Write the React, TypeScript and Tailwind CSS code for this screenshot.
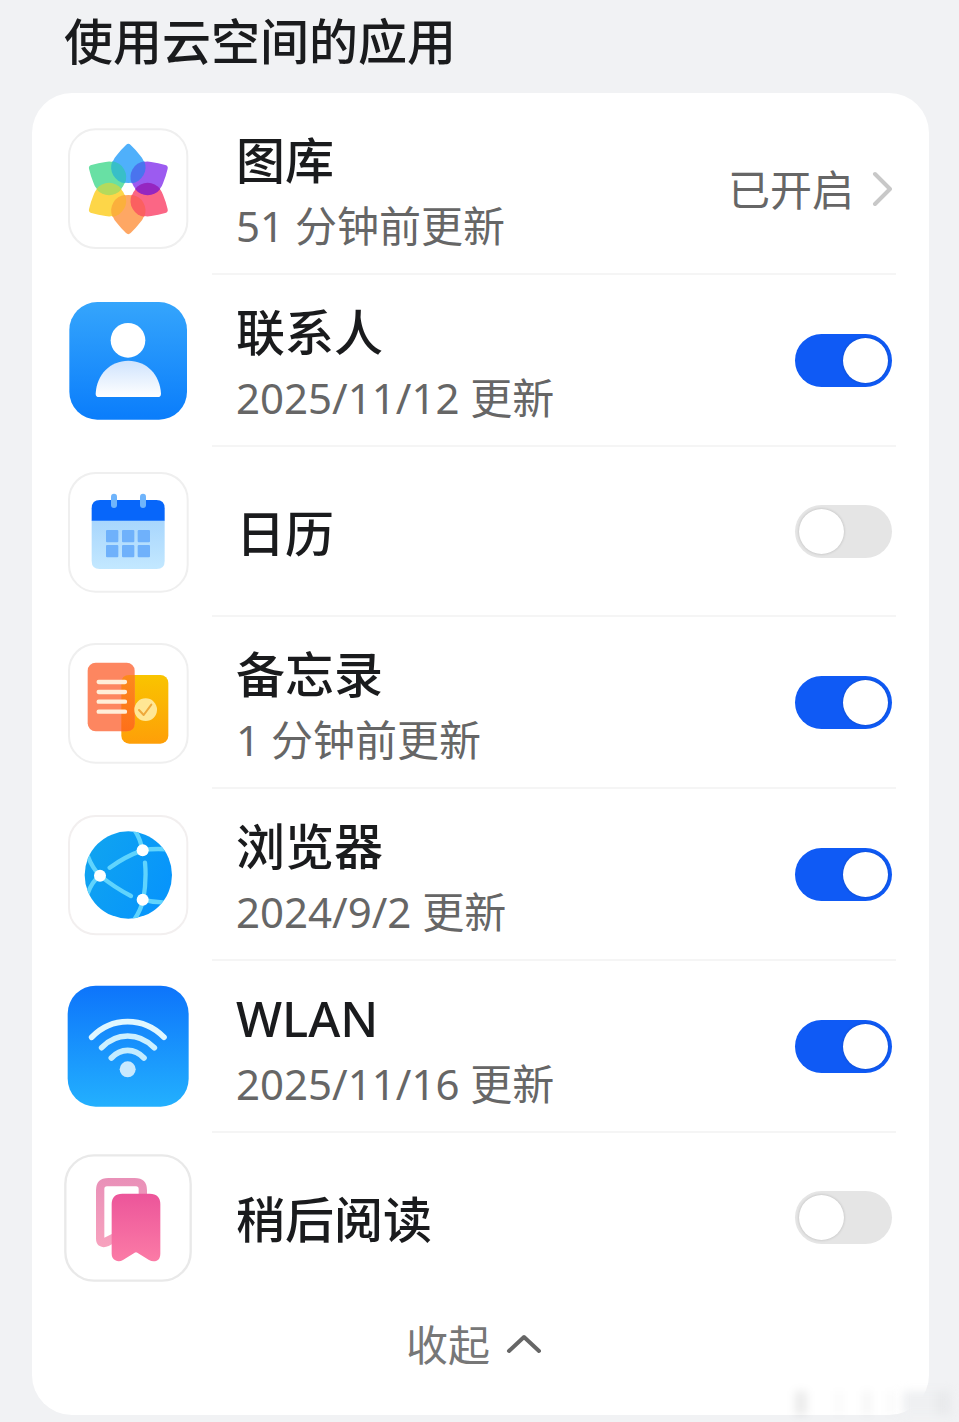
import { useState } from "react";
import type { ReactNode } from "react";

function GalleryIcon() {
  const petals = [
    { angle: 0, color: "#4fb0fb" },
    { angle: 60, color: "#9c5bf0" },
    { angle: 120, color: "#fb6685" },
    { angle: 180, color: "#fea764" },
    { angle: 240, color: "#fdd648" },
    { angle: 300, color: "#68e0a4" },
  ];
  const overlaps = [
    { angle: 30, color: "#4a74ee" },
    { angle: 90, color: "#9526c0" },
    { angle: 150, color: "#fb6060" },
    { angle: 210, color: "#fbb03c" },
    { angle: 270, color: "#b4da5c" },
    { angle: 330, color: "#38bfc8" },
  ];
  return (
    <svg viewBox="42 45 384 384" className="size-32" aria-hidden="true">
      <rect x="57" y="58" width="355" height="356" rx="80" fill="#fff" stroke="#efefef" strokeWidth="6" />
      {petals.map((p) => (
        <path
          key={p.angle}
          d="M228 105Q235 98 242 105Q258 120 271 137A49 49 0 1 1 199 137Q212 120 228 105Z"
          fill={p.color}
          transform={`rotate(${p.angle} 235 237)`}
        />
      ))}
      {overlaps.map((o) => (
        <path
          key={o.angle}
          d="M235 141A48 48 0 0 1 235 217A48 48 0 0 1 235 141Z"
          fill={o.color}
          transform={`rotate(${o.angle} 235 237)`}
        />
      ))}
    </svg>
  );
}

function ContactsIcon() {
  return (
    <svg viewBox="42 36 384 384" className="size-32" aria-hidden="true">
      <defs>
        <linearGradient id="contacts-bg" x1="0" y1="0" x2="0" y2="1">
          <stop offset="0" stopColor="#35a5fc" />
          <stop offset="1" stopColor="#0a7dfb" />
        </linearGradient>
        <linearGradient id="contacts-body" x1="0" y1="0" x2="0" y2="1">
          <stop offset="0" stopColor="#cfe3fd" />
          <stop offset="1" stopColor="#fff" />
        </linearGradient>
      </defs>
      <rect x="58" y="51" width="353" height="353" rx="84" fill="url(#contacts-bg)" />
      <circle cx="234" cy="166" r="52" fill="#fff" />
      <path d="M137 326C140 268 181 227 235 227S330 268 333 326Q333 336 323 336H147Q137 336 137 326Z" fill="url(#contacts-body)" />
    </svg>
  );
}

function CalendarIcon() {
  return (
    <svg viewBox="42 39 384 384" className="size-32" aria-hidden="true">
      <defs>
        <linearGradient id="calendar-body" x1="0" y1="0" x2="0" y2="1">
          <stop offset="0" stopColor="#a8d6fd" />
          <stop offset="1" stopColor="#c3e8ff" />
        </linearGradient>
      </defs>
      <rect x="57" y="54" width="356" height="356" rx="80" fill="#fff" stroke="#efefef" strokeWidth="6" />
      <path d="M125 196H344V318Q344 342 320 342H149Q125 342 125 318Z" fill="url(#calendar-body)" />
      <path d="M125 197V160Q125 135 150 135H319Q344 135 344 160V197Z" fill="#0766fa" />
      <rect x="183" y="116" width="18" height="43" rx="9" fill="#6fb4fb" />
      <rect x="270" y="116" width="18" height="43" rx="9" fill="#6fb4fb" />
      {[168, 216, 263].map((x) => (
        <g key={x} fill="#6fb1fb">
          <rect x={x} y="225" width="37" height="37" rx="3" />
          <rect x={x} y="270" width="37" height="37" rx="3" />
        </g>
      ))}
    </svg>
  );
}

function NotesIcon() {
  return (
    <svg viewBox="42 42 384 384" className="size-32" aria-hidden="true">
      <defs>
        <linearGradient id="notes-back" x1="0" y1="0" x2="0" y2="1">
          <stop offset="0" stopColor="#f9c400" />
          <stop offset="1" stopColor="#fe9f08" />
        </linearGradient>
        <linearGradient id="notes-overlap" x1="0" y1="0" x2="0" y2="1">
          <stop offset="0" stopColor="#fc8a1c" />
          <stop offset="1" stopColor="#fe6f1a" />
        </linearGradient>
      </defs>
      <rect x="57" y="57" width="356" height="356" rx="80" fill="#fff" stroke="#efefef" strokeWidth="6" />
      <rect x="214" y="150" width="141" height="206" rx="24" fill="url(#notes-back)" />
      <rect x="113" y="113" width="141" height="206" rx="24" fill="#fd8660" />
      <path d="M254 150H238Q214 150 214 174V319H230Q254 319 254 295Z" fill="url(#notes-overlap)" />
      <path d="M146 171H225M146 201H225M146 230H225M146 260H225" stroke="#ffeed8" strokeWidth="13" strokeLinecap="round" />
      <circle cx="287" cy="254" r="34" fill="#ffe795" />
      <path d="M267 255L281 270L304 239" fill="none" stroke="#eea93b" strokeWidth="6" strokeLinecap="round" strokeLinejoin="round" />
    </svg>
  );
}

function BrowserIcon() {
  return (
    <svg viewBox="42 42 384 384" className="size-32" aria-hidden="true">
      <defs>
        <linearGradient id="browser-globe" x1="0" y1="0" x2="1" y2="0.5">
          <stop offset="0" stopColor="#11a5ef" />
          <stop offset="1" stopColor="#0795fb" />
        </linearGradient>
        <clipPath id="browser-clip">
          <circle cx="235" cy="234" r="131" />
        </clipPath>
      </defs>
      <rect x="57" y="57" width="355" height="355" rx="80" fill="#fff" stroke="#f2efef" strokeWidth="6" />
      <circle cx="235" cy="234" r="131" fill="url(#browser-globe)" />
      <g clipPath="url(#browser-clip)">
        <g fill="none" stroke="#60d4fd" strokeWidth="13" strokeLinecap="round">
          <path d="M251 96Q271 122 277 160Q226 178 179 212" />
          <path d="M277 160Q312 154 350 157" />
          <path d="M150 236Q127 213 113 176" />
          <path d="M150 236Q125 254 113 290" />
          <path d="M150 236Q194 272 243 297" />
          <path d="M285 197Q290 250 280 307Q272 342 250 372" />
          <path d="M278 307Q312 318 350 316" />
        </g>
        <g fill="#fff">
          <circle cx="278" cy="160" r="18" />
          <circle cx="150" cy="236" r="18" />
          <circle cx="278" cy="308" r="18" />
        </g>
      </g>
    </svg>
  );
}

function WlanIcon() {
  return (
    <svg viewBox="42 45 384 384" className="size-32" aria-hidden="true">
      <defs>
        <linearGradient id="wlan-bg" x1="0" y1="0" x2="0" y2="1">
          <stop offset="0" stopColor="#0d74fb" />
          <stop offset="1" stopColor="#23b0fe" />
        </linearGradient>
      </defs>
      <rect x="53" y="53" width="363" height="363" rx="84" fill="url(#wlan-bg)" />
      <g fill="none" strokeWidth="17" strokeLinecap="round">
        <path d="M125 208Q170 161 233 161T342 208" stroke="#e0f7ff" />
        <path d="M155 239Q188 204 233 204T313 239" stroke="#ccf0ff" />
        <path d="M184 270Q205 247 233 247T282 270" stroke="#c4ecff" />
      </g>
      <circle cx="233" cy="304" r="24" fill="#c8e9fe" />
    </svg>
  );
}

function ReadLaterIcon() {
  return (
    <svg viewBox="42 42 384 384" className="size-32" aria-hidden="true">
      <defs>
        <linearGradient id="bookmark-back" x1="0" y1="0" x2="0" y2="1">
          <stop offset="0" stopColor="#e990b8" />
          <stop offset="1" stopColor="#f7a2be" />
        </linearGradient>
        <linearGradient id="bookmark-front" x1="0" y1="0" x2="0" y2="1">
          <stop offset="0" stopColor="#ec559a" />
          <stop offset="1" stopColor="#fb7ba6" />
        </linearGradient>
      </defs>
      <rect x="46" y="46" width="376" height="376" rx="86" fill="#fff" stroke="#e9e9e9" strokeWidth="7" />
      <path
        d="M175 114H254Q291 114 291 151V190H266V147Q266 139 258 139H171Q163 139 163 147V293L187 281V312L176 318Q160 325 149 318Q138 312 138 296V151Q138 114 175 114Z"
        fill="url(#bookmark-back)"
      />
      <path
        d="M217 161H299Q331 161 331 193V341Q331 357 320 362Q309 367 297 360L262 338Q258 336 254 338L219 360Q207 367 196 361Q185 355 185 341V193Q185 161 217 161Z"
        fill="url(#bookmark-front)"
      />
    </svg>
  );
}

interface AppItem {
  id: string;
  name: string;
  detail?: string;
  icon: ReactNode;
  enabled?: boolean;
  status?: string;
}

const apps: AppItem[] = [
  { id: "gallery", name: "图库", detail: "51 分钟前更新", icon: <GalleryIcon />, status: "已开启" },
  { id: "contacts", name: "联系人", detail: "2025/11/12 更新", icon: <ContactsIcon />, enabled: true },
  { id: "calendar", name: "日历", icon: <CalendarIcon />, enabled: false },
  { id: "notes", name: "备忘录", detail: "1 分钟前更新", icon: <NotesIcon />, enabled: true },
  { id: "browser", name: "浏览器", detail: "2024/9/2 更新", icon: <BrowserIcon />, enabled: true },
  { id: "wlan", name: "WLAN", detail: "2025/11/16 更新", icon: <WlanIcon />, enabled: true },
  { id: "read-later", name: "稍后阅读", icon: <ReadLaterIcon />, enabled: false },
];

function Switch({ id, initial }: { id: string; initial: boolean }) {
  const [on, setOn] = useState(initial);
  return (
    <input
      id={id}
      type="checkbox"
      role="switch"
      checked={on}
      onChange={(e) => setOn(e.target.checked)}
      className="h-[53px] w-[97px] shrink-0 cursor-pointer appearance-none rounded-full bg-[#e5e5e5] before:m-1 before:block before:size-[45px] before:rounded-full before:bg-white before:shadow-[0_0_3px_rgba(0,0,0,0.2)] checked:bg-[#0f5af5] checked:before:ml-12"
    />
  );
}

function Row({ app }: { app: AppItem }) {
  const text = (
    <>
      <span className="block text-[49px] leading-[72px] font-medium text-[#1a1b1d]">{app.name}</span>
      {app.detail && <span className="block text-[42px] leading-[60px] text-[#666]">{app.detail}</span>}
    </>
  );
  return (
    <li className="group flex items-stretch">
      <div className="flex w-32 shrink-0 items-center">{app.icon}</div>
      <div
        className={`ml-5 flex min-w-0 flex-1 items-center justify-between border-b-2 border-[#f5f5f5] pr-1 pl-6 group-last:border-transparent ${
          app.detail ? "py-[17px]" : "py-[46px]"
        }`}
      >
        {app.status ? (
          <a href="#gallery" className="flex flex-1 items-center justify-between">
            <span className="pt-1">{text}</span>
            <span className="flex items-center gap-[18px] pt-1 text-[42px] leading-[60px] text-[#666]">
              {app.status}
              <svg viewBox="0 0 20 38" className="h-[38px] w-5" fill="none" aria-hidden="true">
                <path d="M3 3L18 18L3 33" stroke="#c8c8c8" strokeWidth="4" strokeLinecap="round" strokeLinejoin="round" />
              </svg>
            </span>
          </a>
        ) : (
          <>
            <label htmlFor={app.id} className="pt-1">
              {text}
            </label>
            <Switch id={app.id} initial={app.enabled ?? false} />
          </>
        )}
      </div>
    </li>
  );
}

export default function App() {
  return (
    <main className="relative min-h-screen bg-[#f1f2f4] pr-[30px] pb-2 pl-8 font-['Noto_Sans','Noto_Sans_CJK_SC',sans-serif]">
      <h1 className="px-8 pt-[5px] pb-4 text-[49px] leading-[72px] font-medium text-[#1a1b1d]">使用云空间的应用</h1>
      <section className="rounded-[40px] bg-white pt-[10px] pr-[33px] pb-[30px] pl-8">
        <ul>
          {apps.map((app) => (
            <Row key={app.id} app={app} />
          ))}
        </ul>
        <button type="button" className="mx-auto flex cursor-pointer items-center gap-4 pt-3 pr-3 pb-[10px] text-[42px] leading-[60px] text-[#777]">
          收起
          <svg viewBox="0 0 36 22" className="h-[22px] w-9" fill="none" aria-hidden="true">
            <path d="M3 17L18 3L33 17" stroke="#666" strokeWidth="4" strokeLinecap="round" strokeLinejoin="round" />
          </svg>
        </button>
      </section>
      <div aria-hidden="true" className="pointer-events-none absolute right-2 bottom-2 flex h-7 items-end blur-[4px]">
        <span className="mr-7 h-6 w-3 bg-black/8" />
        <span className="mr-5 h-6 w-2 bg-black/2" />
        <span className="mr-4 h-6 w-2 bg-black/4" />
        <span className="mr-2 h-6 w-2 bg-black/2" />
        <span className="h-6 w-8 bg-[#eff0f2]" />
        <span className="h-6 w-4 bg-[#e9eaec]" />
      </div>
    </main>
  );
}
